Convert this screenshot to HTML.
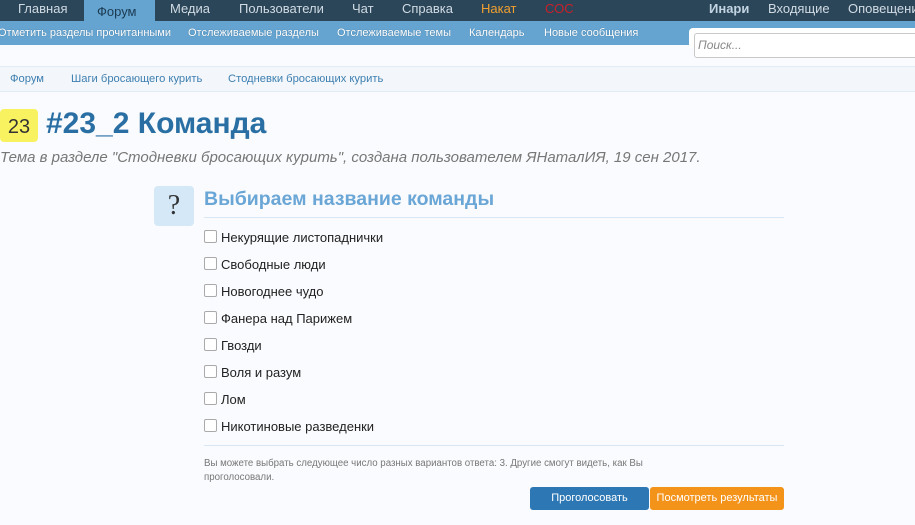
<!DOCTYPE html>
<html><head><meta charset="utf-8"><style>
*{margin:0;padding:0;box-sizing:border-box}
body{width:915px;height:525px;overflow:hidden;background:#fafbfe;font-family:"Liberation Sans","DejaVu Sans",sans-serif;position:relative}
.a{position:absolute;white-space:nowrap}
#top{position:absolute;left:0;top:0;width:915px;height:21px;background:#2c4659}
#top .a{font-size:13px;color:#d0dbe4;top:0;line-height:18px}
#sub{position:absolute;left:0;top:21px;width:915px;height:24px;background:#65a4d0}
#sub .a{font-size:11px;color:#fff;top:6px;text-shadow:0 0 1px #3b6e94}
.cb{position:absolute;left:204px;width:13px;height:13px;border:1px solid #aaa;border-radius:2px;background:#fff}
.opt{font-size:13px;color:#222;left:221px}
</style></head><body>
<div id="top">
<div class="a" style="left:84px;top:0;width:71px;height:21px;background:#65a4d0"></div>
<span class="a" style="left:18px">Главная</span>
<span class="a" style="left:97px;top:3px;color:#1b3a52">Форум</span>
<span class="a" style="left:170px">Медиа</span>
<span class="a" style="left:239px">Пользователи</span>
<span class="a" style="left:352px">Чат</span>
<span class="a" style="left:402px">Справка</span>
<span class="a" style="left:481px;color:#f0a030">Накат</span>
<span class="a" style="left:545px;color:#c8202a">СОС</span>
<span class="a" style="left:709px;font-weight:bold;color:#c2d4e2">Инари</span>
<span class="a" style="left:768px">Входящие</span>
<span class="a" style="left:848px">Оповещени</span>
</div>
<div id="sub">
<span class="a" style="left:-2px">Отметить разделы прочитанными</span>
<span class="a" style="left:188px">Отслеживаемые разделы</span>
<span class="a" style="left:337px">Отслеживаемые темы</span>
<span class="a" style="left:469px">Календарь</span>
<span class="a" style="left:544px">Новые сообщения</span>
</div>
<div class="a" style="left:689px;top:28px;width:226px;height:20px;background:#fff;border-radius:4px 0 0 0"></div>
<div class="a" style="left:694px;top:33px;width:225px;height:25px;background:#fff;border:1px solid #c8c8c8;border-radius:3px;font-size:12px;font-style:italic;color:#888;padding:4px 3px">Поиск...</div>
<div class="a" style="left:0;top:66px;width:915px;height:26px;background:#f3f7fb;border-top:1px solid #e2ecf5;border-bottom:1px solid #e2ecf5"></div>
<span class="a" style="left:10px;top:73px;font-size:11.2px;color:#3e7fb0">Форум</span>
<span class="a" style="left:71px;top:73px;font-size:11.2px;color:#3e7fb0">Шаги бросающего курить</span>
<span class="a" style="left:228px;top:73px;font-size:11.2px;color:#3e7fb0">Стодневки бросающих курить</span>
<div class="a" style="left:0;top:109px;width:38px;height:33px;background:#f8f260;border-radius:4px;font-size:20px;color:#333;text-align:center;line-height:37px">23</div>
<span class="a" style="left:46px;top:107px;font-size:30px;font-weight:bold;color:#2a6fa4">#23_2 Команда</span>
<span class="a" style="left:0;top:149px;font-size:15px;font-style:italic;color:#777">Тема в разделе "Стодневки бросающих курить", создана пользователем ЯНаталИЯ, 19 сен 2017.</span>
<div class="a" style="left:154px;top:186px;width:40px;height:40px;background:#d5e8f8;border-radius:4px;font-family:'Liberation Serif',serif;font-size:28px;color:#333;text-align:center;line-height:40px">?</div>
<span class="a" style="left:204px;top:188px;font-size:19.5px;font-weight:bold;color:#6aa6d6">Выбираем название команды</span>
<div class="a" style="left:204px;top:217px;width:580px;height:1px;background:#d8e7f3"></div>
<div class="cb" style="top:230px"></div><span class="a opt" style="top:230px">Некурящие листопаднички</span>
<div class="cb" style="top:257px"></div><span class="a opt" style="top:257px">Свободные люди</span>
<div class="cb" style="top:284px"></div><span class="a opt" style="top:284px">Новогоднее чудо</span>
<div class="cb" style="top:311px"></div><span class="a opt" style="top:311px">Фанера над Парижем</span>
<div class="cb" style="top:338px"></div><span class="a opt" style="top:338px">Гвозди</span>
<div class="cb" style="top:365px"></div><span class="a opt" style="top:365px">Воля и разум</span>
<div class="cb" style="top:392px"></div><span class="a opt" style="top:392px">Лом</span>
<div class="cb" style="top:419px"></div><span class="a opt" style="top:419px">Никотиновые разведенки</span>
<div class="a" style="left:204px;top:445px;width:580px;height:1px;background:#d8e7f3"></div>
<span class="a" style="left:204px;top:457px;font-size:9.7px;color:#777;line-height:14px">Вы можете выбрать следующее число разных вариантов ответа: 3. Другие смогут видеть, как Вы<br>проголосовали.</span>
<div class="a" style="left:530px;top:487px;width:119px;height:23px;background:#2d78b4;border-radius:3px;color:#fff;font-size:11px;text-align:center;line-height:23px">Проголосовать</div>
<div class="a" style="left:650px;top:487px;width:134px;height:23px;background:#f4931a;border-radius:3px;color:#fff;font-size:11px;text-align:center;line-height:23px">Посмотреть результаты</div>
</body></html>
